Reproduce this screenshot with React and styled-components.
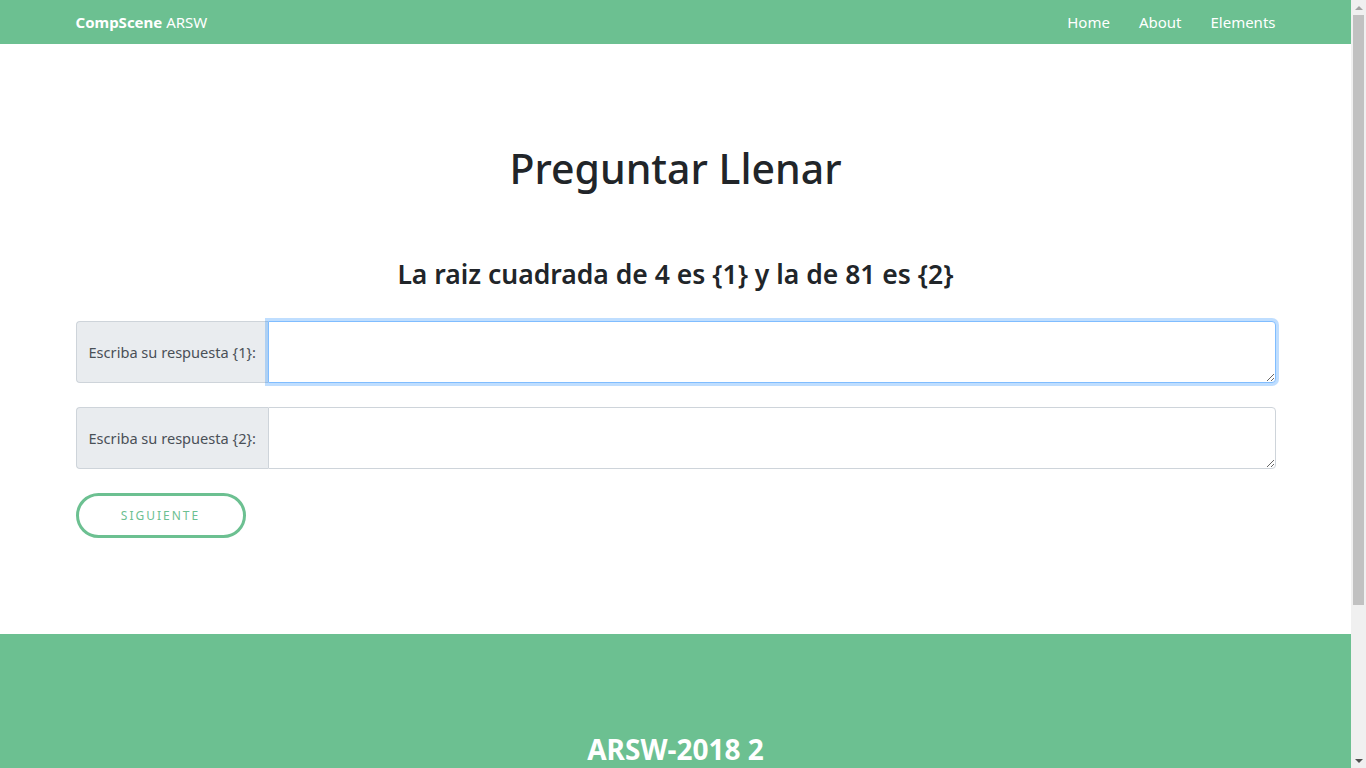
import React from 'react'
import styled, { createGlobalStyle } from 'styled-components'

const GREEN = '#6cc091'

const GlobalStyle = createGlobalStyle`
  body {
    margin: 0 15px 0 0;
    font-family: "Noto Sans", "Open Sans", sans-serif;
    color: #212529;
    background: #fff;
  }
`

// drawn window scrollbar, sits over the right edge of the viewport
const ScrollBar = styled.div`
  position: fixed;
  top: 0;
  right: 0;
  width: 15px;
  height: 100vh;
  background: #f0f0f0;
  display: flex;
  flex-direction: column;
  align-items: center;
`

const Arrow = styled.div`
  height: 15px;
  width: 15px;
  display: flex;
  align-items: center;
  justify-content: center;
  margin-top: ${p => (p.$down ? 'auto' : '0')};
  &::before {
    content: '';
    border-left: 4px solid transparent;
    border-right: 4px solid transparent;
    ${p => (p.$down
      ? 'border-top: 4px solid #505050;'
      : 'border-bottom: 4px solid #a3a3a3;')}
  }
`

const Thumb = styled.div`
  width: 11px;
  height: 590px;
  background: #c1c1c1;
`

const Nav = styled.nav`
  background: ${GREEN};
  height: 44px;
`

const NavInner = styled.div`
  max-width: 1200px;
  margin: 0 auto;
  height: 100%;
  display: flex;
  align-items: center;
  justify-content: space-between;
`

const Brand = styled.a`
  color: #fff;
  font-size: 15px;
  text-decoration: none;
  b { font-weight: 700; }
`

const NavLinks = styled.ul`
  display: flex;
  list-style: none;
  margin: 0;
  padding: 0;
  gap: 29px;
  li a {
    color: #fff;
    font-size: 15px;
    text-decoration: none;
  }
`

const Main = styled.main`
  max-width: 1200px;
  margin: 0 auto;
  padding: 100px 0 96px;
`

const Title = styled.h1`
  text-align: center;
  font-size: 41px;
  font-weight: 500;
  line-height: 1.2;
  margin: 0 0 64px;
`

const Question = styled.h3`
  text-align: center;
  font-size: 26.5px;
  font-weight: 600;
  line-height: 1.3;
  margin: 0 0 29px;
`

const InputGroup = styled.div`
  display: flex;
  margin-bottom: 24px;
`

const Addon = styled.label`
  display: flex;
  align-items: center;
  width: 192px;
  box-sizing: border-box;
  padding: 0 12px;
  background: #e9ecef;
  border: 1px solid #ced4da;
  border-right: none;
  border-radius: 4px 0 0 4px;
  color: #495057;
  font-size: 14.6px;
  white-space: nowrap;
`

const Area = styled.textarea`
  flex: 1;
  height: 62px;
  box-sizing: border-box;
  padding: 6px 12px;
  font-family: inherit;
  font-size: 16px;
  color: #495057;
  border: 1px solid #ced4da;
  border-radius: 0 4px 4px 0;
  outline: none;
  resize: vertical;
  &:focus {
    border-color: #80bdff;
    box-shadow: 0 0 0 3px rgba(0, 123, 255, 0.25);
  }
`

const Button = styled.button`
  width: 170px;
  height: 45px;
  border: 3px solid ${GREEN};
  border-radius: 24px;
  background: #fff;
  color: ${GREEN};
  font-family: inherit;
  font-size: 12px;
  letter-spacing: 2px;
  text-transform: uppercase;
  cursor: pointer;
`

const Footer = styled.footer`
  background: ${GREEN};
  padding: 96px 0 120px;
  text-align: center;
  h2 {
    margin: 0;
    color: #fff;
    font-size: 28px;
    font-weight: 700;
  }
`

export default function App() {
  return (
    <>
      <GlobalStyle />
      <Nav>
        <NavInner>
          <Brand href="#"><b>CompScene</b> ARSW</Brand>
          <NavLinks>
            <li><a href="#">Home</a></li>
            <li><a href="#">About</a></li>
            <li><a href="#">Elements</a></li>
          </NavLinks>
        </NavInner>
      </Nav>
      <Main>
        <Title>Preguntar Llenar</Title>
        <Question>La raiz cuadrada de 4 es {'{1}'} y la de 81 es {'{2}'}</Question>
        <InputGroup>
          <Addon htmlFor="r1">Escriba su respuesta {'{1}'}:</Addon>
          <Area id="r1" rows={2} autoFocus />
        </InputGroup>
        <InputGroup>
          <Addon htmlFor="r2">Escriba su respuesta {'{2}'}:</Addon>
          <Area id="r2" rows={2} />
        </InputGroup>
        <Button>Siguiente</Button>
      </Main>
      <Footer>
        <h2>ARSW-2018 2</h2>
      </Footer>
      <ScrollBar>
        <Arrow />
        <Thumb />
        <Arrow $down />
      </ScrollBar>
    </>
  )
}
